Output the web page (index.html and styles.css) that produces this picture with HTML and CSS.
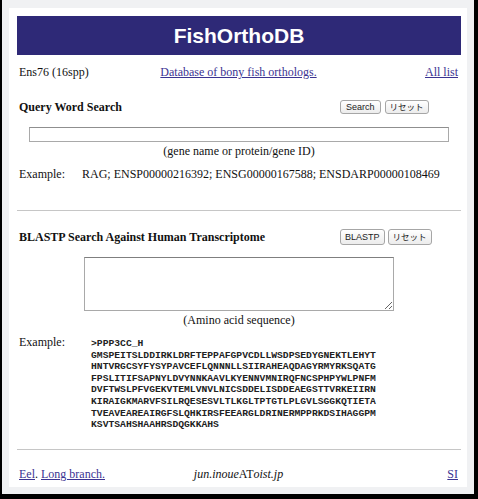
FILE: index.html
```html
<!DOCTYPE html>
<html lang="ja">
<head>
    <meta charset="UTF-8">
    <meta name="viewport" content="width=device-width, initial-scale=1.0">
    <title>FishOrthoDB</title>
    <link rel="stylesheet" href="styles.css">
</head>
<body>
    <div class="frame">
        <div class="page">
            <h1 class="banner">FishOrthoDB</h1>

            <div class="topline">
                <span>Ens76 (16spp)</span>
                <a href="#" class="center">Database of bony fish orthologs.</a>
                <a href="#" class="right">All list</a>
            </div>

            <!-- Keyword search -->
            <form class="search">
                <div class="section-head">
                    <h2>Query Word Search</h2>
                    <div class="buttons">
                        <button type="button" class="btn">Search</button>
                        <button type="reset" class="btn btn-reset">リセット</button>
                    </div>
                </div>
                <input type="text" class="word-input">
                <p class="caption">(gene name or protein/gene ID)</p>
                <div class="example">
                    <span class="label">Example:</span>
                    <span>RAG; ENSP00000216392; ENSG00000167588; ENSDARP00000108469</span>
                </div>
            </form>

            <hr>

            <!-- BLASTP -->
            <form class="search">
                <div class="section-head">
                    <h2>BLASTP Search Against Human Transcriptome</h2>
                    <div class="buttons tall">
                        <button type="button" class="btn">BLASTP</button>
                        <button type="reset" class="btn btn-reset">リセット</button>
                    </div>
                </div>
                <textarea class="seq-input"></textarea>
                <p class="caption">(Amino acid sequence)</p>
                <div class="example seq">
                    <span class="label">Example:</span>
<pre>&gt;PPP3CC_H
GMSPEITSLDDIRKLDRFTEPPAFGPVCDLLWSDPSEDYGNEKTLEHYT
HNTVRGCSYFYSYPAVCEFLQNNNLLSIIRAHEAQDAGYRMYRKSQATG
FPSLITIFSAPNYLDVYNNKAAVLKYENNVMNIRQFNCSPHPYWLPNFM
DVFTWSLPFVGEKVTEMLVNVLNICSDDELISDDEAEGSTTVRKEIIRN
KIRAIGKMARVFSILRQESESVLTLKGLTPTGTLPLGVLSGGKQTIETA
TVEAVEAREAIRGFSLQHKIRSFEEARGLDRINERMPPRKDSIHAGGPM
KSVTSAHSHAAHRSDQGKKAHS</pre>
                </div>
            </form>

            <hr class="foot-rule">

            <div class="footer">
                <span><a href="#">Eel</a>. <a href="#">Long branch.</a></span>
                <span class="mail"><i>jun.inoue</i>AT<i>oist.jp</i></span>
                <a href="#" class="right">SI</a>
            </div>
        </div>
    </div>
</body>
</html>
```

FILE: styles.css
```css
:root {
    --banner-color: #2e2977;
    --link-color: #3b3392;
    --frame-color: #f0f1f3;
}

* {
    box-sizing: border-box;
}

body {
    margin: 0;
    padding: 0 4px 5px 2px;
    background: #000;
    font-family: "Liberation Serif", "Noto Sans CJK JP", serif;
    font-size: 12px;
    color: #111;
}

.frame {
    background: var(--frame-color);
    padding: 8px 7px 7px 7px;
}

.page {
    background: white;
    padding: 8px 6px 0 8px;
    height: 479px;
}

a {
    color: var(--link-color);
}

.banner {
    margin: 0;
    height: 39px;
    line-height: 39px;
    background: var(--banner-color);
    color: white;
    text-align: center;
    font-family: "Liberation Sans", Arial, sans-serif;
    font-size: 21px;
    font-weight: bold;
}

.topline {
    display: grid;
    grid-template-columns: 1fr auto 1fr;
    margin-top: 8px;
    padding: 0 3px 0 2px;
    line-height: 18px;
}

.right {
    justify-self: end;
}

.section-head {
    display: grid;
    grid-template-columns: 1fr 121px;
    align-items: center;
    margin-top: 17px;
    padding-left: 2px;
    height: 18px;
}

.section-head h2 {
    margin: 0;
    font-size: 12px;
}

.buttons {
    display: flex;
    gap: 4px;
}

.btn {
    height: 14px;
    padding: 0 5px;
    border: 1px solid #a6a6a6;
    border-radius: 3px;
    background: linear-gradient(#ffffff, #ececec);
    font-family: "Liberation Sans", "Noto Sans CJK JP", sans-serif;
    font-size: 9px;
    line-height: 12px;
    color: #222;
}

.btn-reset {
    padding: 0 4px;
    font-size: 8.5px;
}

.buttons.tall {
    gap: 3px;
}

.buttons.tall .btn {
    height: 16px;
    line-height: 14px;
    padding: 0 4px;
}

.word-input {
    display: block;
    width: 420px;
    height: 15px;
    margin: 11px auto 0;
    border: 1px solid #a9a9a9;
    border-top-color: #8f8f8f;
}

.seq-input {
    display: block;
    width: 310px;
    height: 54px;
    margin: 11px auto 0;
    border: 1px solid #a9a9a9;
    border-top-color: #7f7f7f;
    resize: vertical;
}

.caption {
    margin: 1px 0 0;
    text-align: center;
    line-height: 16px;
}

.example {
    display: grid;
    grid-template-columns: 63px 1fr;
    margin-top: 6px;
    padding-left: 2px;
    line-height: 18px;
}

.example.seq {
    grid-template-columns: 72px 1fr;
    align-items: start;
    line-height: 16px;
}

.example pre {
    margin: 4px 0 0;
    font-family: "Liberation Mono", "Courier New", monospace;
    font-size: 9.7px;
    font-weight: bold;
    line-height: 11.6px;
    color: #222;
}

hr {
    margin: 27px 0 0;
    border: none;
    border-top: 1px solid #c6c6c6;
}

hr.foot-rule {
    margin-top: 18px;
}

.footer {
    display: grid;
    grid-template-columns: 1fr auto 1fr;
    margin-top: 15px;
    padding: 0 3px 0 2px;
    line-height: 18px;
}

.mail i {
    font-style: italic;
}
```
